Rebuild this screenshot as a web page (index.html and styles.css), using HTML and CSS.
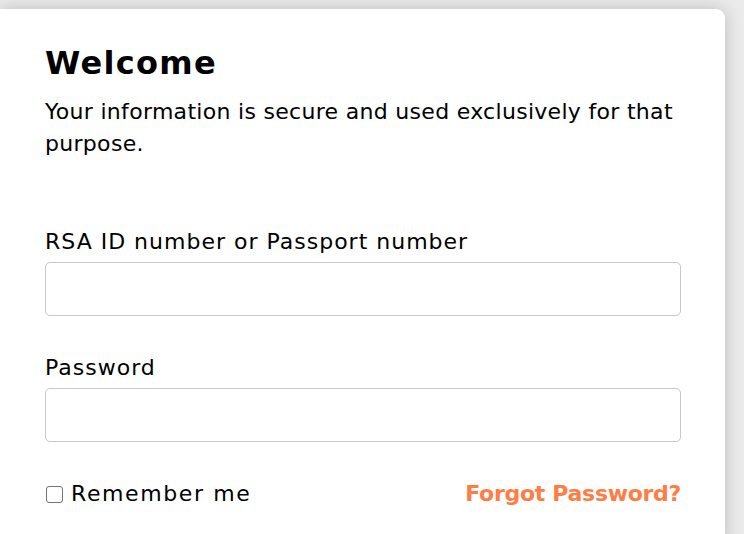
FILE: index.html
```html
<!DOCTYPE html>
<html>
<head>
<meta charset="utf-8">
<link rel="stylesheet" href="styles.css">
</head>
<body>
<div class="card">
  <h1 class="title">Welcome</h1>
  <p class="intro">Your information is secure and used exclusively for that purpose.</p>
  <form class="form">
    <div class="field">
      <label class="label" for="id">RSA ID number or Passport number</label>
      <input class="input" id="id" type="text">
    </div>
    <div class="field">
      <label class="label" for="pw">Password</label>
      <input class="input" id="pw" type="password">
    </div>
    <div class="row">
      <label class="remember"><input type="checkbox" class="check"><span>Remember me</span></label>
      <a class="forgot" href="#">Forgot Password?</a>
    </div>
  </form>
</div>
</body>
</html>
```
FILE: styles.css
```css
html, body {
  margin: 0;
  padding: 0;
}
body {
  background: #ebebeb;
  font-family: "DejaVu Sans", sans-serif;
  color: #000;
  padding-top: 9px;
  height: 525px;
  overflow: hidden;
}
.card {
  width: 725px;
  box-sizing: border-box;
  background: #fff;
  border-top-right-radius: 9px;
  box-shadow: 0 0 18px rgba(0,0,0,0.2);
  padding: 34px 44px 40px 45px;
  min-height: 540px;
}
.title {
  margin: 0;
  font-size: 32px;
  font-weight: 700;
  line-height: 40px;
  letter-spacing: 1.3px;
}
.intro {
  margin: 13px 0 0;
  font-size: 22px;
  line-height: 32px;
  letter-spacing: 0.3px;
  width: 650px;
}
.form {
  margin-top: 68px;
  display: flex;
  flex-direction: column;
  gap: 38px;
}
.field {
  display: flex;
  flex-direction: column;
}
.label {
  font-size: 22px;
  line-height: 28px;
  margin-bottom: 6px;
  letter-spacing: 1px;
}
.input {
  height: 54px;
  box-sizing: border-box;
  border: 1px solid #c8c8c8;
  border-radius: 5px;
  background: #fff;
  font: inherit;
}
.row {
  display: flex;
  justify-content: space-between;
  align-items: center;
  line-height: 28px;
}
.remember {
  font-size: 22px;
  display: flex;
  align-items: center;
  gap: 8px;
  letter-spacing: 1.6px;
}
.check {
  appearance: none;
  -webkit-appearance: none;
  margin: 0 0 0 1px;
  width: 17px;
  height: 17px;
  box-sizing: border-box;
  border: 1.5px solid #747474;
  border-radius: 3px;
  background: #fff;
}
.forgot {
  color: #ff7d45;
  font-weight: 700;
  font-size: 22px;
  letter-spacing: -0.3px;
  text-decoration: none;
}
```
